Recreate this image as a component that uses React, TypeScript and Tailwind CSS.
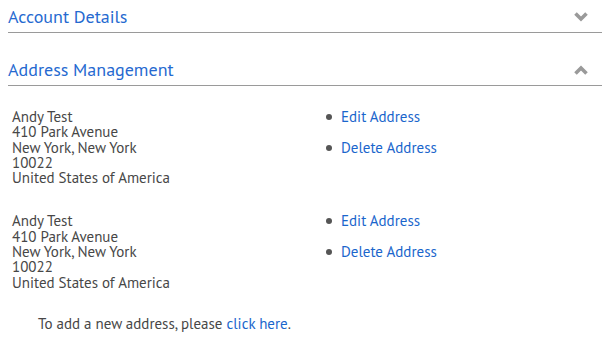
interface IAddress {
  name: string;
  street: string;
  city: string;
  zip: string;
  country: string;
}

const addresses: IAddress[] = [
  {
    name: "Andy Test",
    street: "410 Park Avenue",
    city: "New York, New York",
    zip: "10022",
    country: "United States of America",
  },
  {
    name: "Andy Test",
    street: "410 Park Avenue",
    city: "New York, New York",
    zip: "10022",
    country: "United States of America",
  },
];

const Chevron = ({ up }: { up: boolean }) => (
  <svg width="14" height="10" viewBox="0 0 14 10" className="block">
    <path
      d={up ? "M1.5 8.5 L7 3 L12.5 8.5" : "M1.5 1.5 L7 7 L12.5 1.5"}
      fill="none"
      stroke="#9a9a9a"
      strokeWidth="3.6"
    />
  </svg>
);

const Panel = ({ title, open }: { title: string; open: boolean }) => {
  return (
    <div className="flex items-center justify-between border-b border-[#9a9a9a] pb-[4px]">
      <h2 className="text-[18px] leading-[22px] text-[#2569d0]">{title}</h2>
      <span className="mr-[14px]">
        <Chevron up={open} />
      </span>
    </div>
  );
};

const AddressRow = ({ name, street, city, zip, country }: IAddress) => {
  return (
    <div className="flex">
      <div className="w-[317px] pl-[4px] text-[15px] leading-[15.3px] text-[#474747]">
        <div>{name}</div>
        <div>{street}</div>
        <div>{city}</div>
        <div>{zip}</div>
        <div>{country}</div>
      </div>
      <ul className="-mt-[1px] space-y-[13px] text-[15px] leading-[18px]">
        <li className="flex items-center">
          <span className="mr-[9px] ml-[1px] size-[6px] rounded-full bg-[#555]" />
          <a href="#" className="text-[#1a66cc]">
            Edit Address
          </a>
        </li>
        <li className="flex items-center">
          <span className="mr-[9px] ml-[1px] size-[6px] rounded-full bg-[#555]" />
          <a href="#" className="text-[#1a66cc]">
            Delete Address
          </a>
        </li>
      </ul>
    </div>
  );
};

function App() {
  return (
    <div
      className="h-[338px] w-[610px] bg-white px-[8px] pt-[6px]"
      style={{ fontFamily: '"PT Sans", "Noto Sans", sans-serif' }}
    >
      <Panel title="Account Details" open={false} />
      <div className="mt-[26px]">
        <Panel title="Address Management" open={true} />
      </div>
      <div className="mt-[23px] space-y-[28px]">
        {addresses.map((address, index) => (
          <AddressRow key={index} {...address} />
        ))}
      </div>
      <p className="mt-[25px] pl-[30px] text-[15px] leading-[18px] text-[#474747]">
        To add a new address, please{" "}
        <a href="#" className="text-[#1a66cc]">
          click here
        </a>
        .
      </p>
    </div>
  );
}

export default App;
